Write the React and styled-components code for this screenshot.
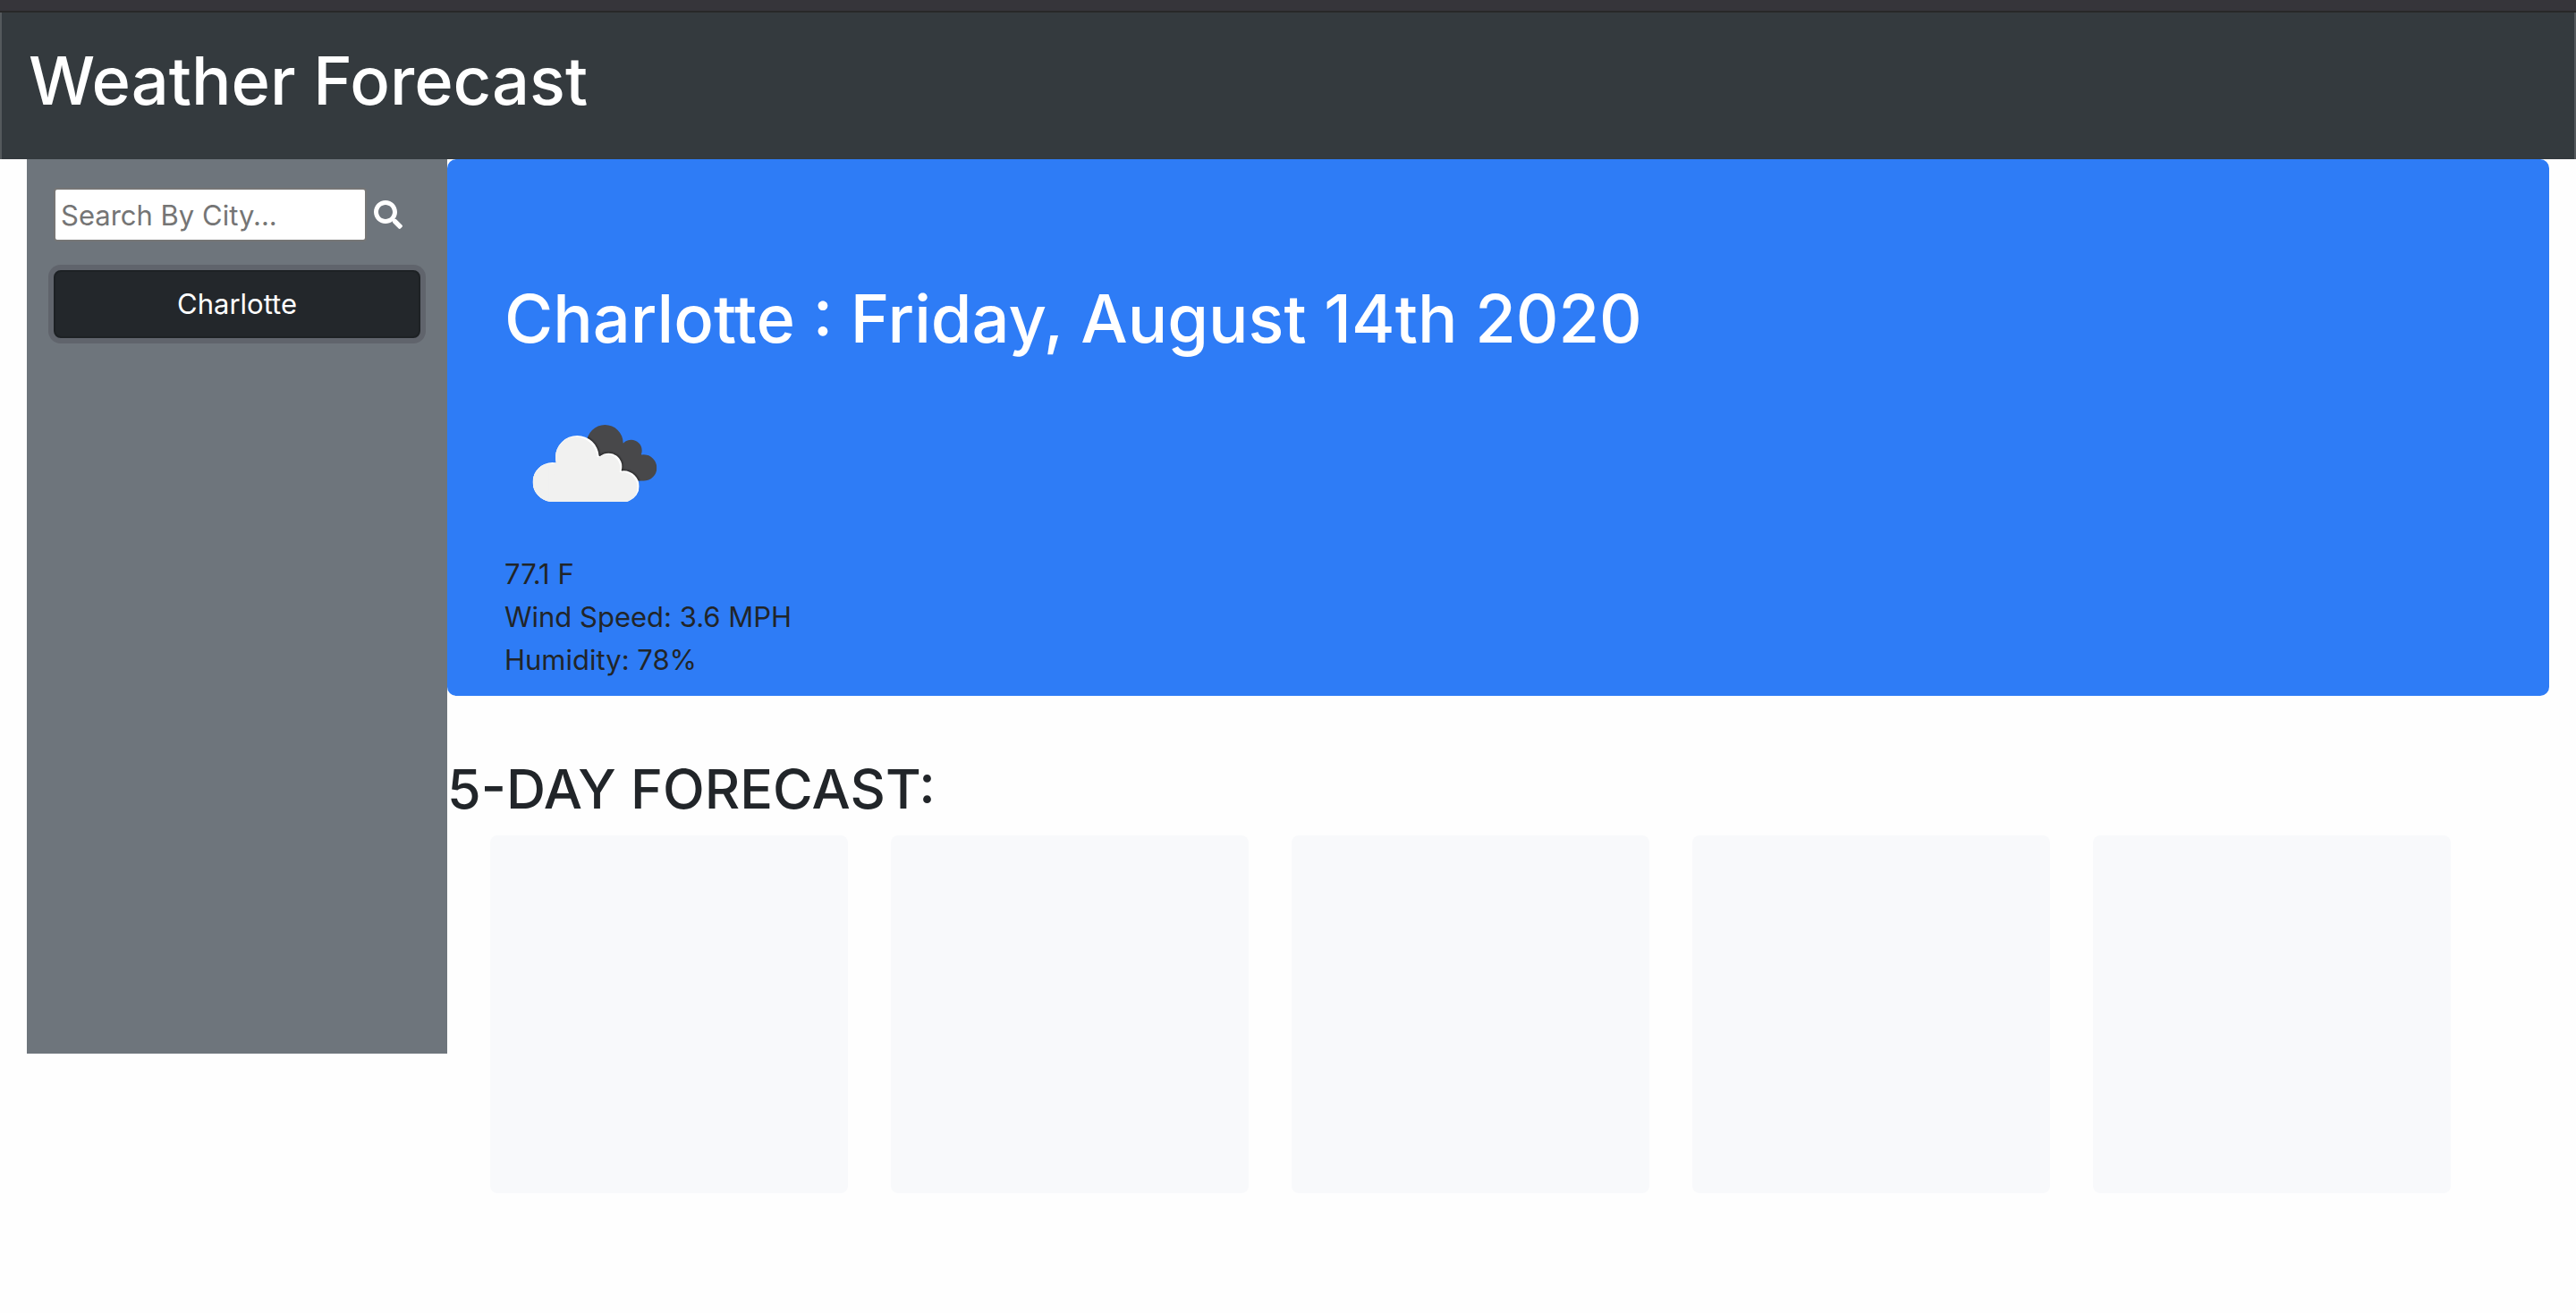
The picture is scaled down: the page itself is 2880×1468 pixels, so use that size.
import React, { useState } from "react";
import styled, { createGlobalStyle } from "styled-components";
import { FaSearch } from "react-icons/fa";

const GlobalStyle = createGlobalStyle`
  *, *::before, *::after {
    box-sizing: border-box;
  }

  body {
    margin: 0;
    background: #fefefe;
    color: #212529;
    font-family: Inter, Roboto, "Liberation Sans", sans-serif;
    font-size: 31px;
    line-height: 48px;
  }
`;

const TopStrip = styled.div`
  height: 14px;
  background: #36353a;
  border-bottom: 2px solid #282828;
`;

const Header = styled.header`
  padding: 28px 30px 40px;
  background: #343a3e;
  border: solid #54595c;
  border-width: 0 2px;
`;

const Title = styled.h1`
  margin: 0;
  color: #fff;
  font-size: 74px;
  font-weight: 500;
  line-height: 96px;
`;

const Layout = styled.div`
  display: grid;
  grid-template-columns: minmax(0, 1fr) minmax(0, 5fr);
  align-items: start;
  padding: 0 30px;
`;

const Sidebar = styled.aside`
  display: flex;
  flex-direction: column;
  gap: 32px;
  min-height: 1000px;
  padding: 32px 30px;
  background: #6e757c;
`;

const SearchForm = styled.form`
  display: flex;
  align-items: center;
  gap: 8px;
`;

const SearchInput = styled.input`
  width: 350px;
  min-width: 0;
  height: 60px;
  padding: 2px 6px;
  border: 2px solid #767676;
  border-radius: 4px;
  background: #fff;
  color: #212529;
  font: inherit;

  &::placeholder {
    color: #757575;
    opacity: 1;
  }
`;

const SearchButton = styled.button`
  display: flex;
  padding: 0;
  border: 0;
  background: none;
  color: #fff;
  font-size: 32px;
  cursor: pointer;
`;

const CityButton = styled.button`
  height: 76px;
  border: 2px solid #1d2124;
  border-radius: 8px;
  background: #23272b;
  box-shadow: 0 0 0 6px #60646c;
  color: #fff;
  font: inherit;
  cursor: pointer;
`;

const CurrentWeather = styled.section`
  padding: 130px 64px 16px;
  border-radius: 10px;
  background: #2e7cf6;
`;

const WeatherIcon = styled.svg`
  display: block;
  width: 200px;
  height: 200px;
  margin-top: 14px;
`;

const Reading = styled.p`
  margin: 0;
`;

const ForecastTitle = styled.h2`
  margin: 66px 0 14px;
  font-size: 61px;
  font-weight: 500;
  line-height: 76px;
`;

const ForecastList = styled.ul`
  display: flex;
  flex-wrap: wrap;
  gap: 48px;
  margin: 0;
  padding: 0 48px;
  list-style: none;
`;

const ForecastCard = styled.li`
  width: 400px;
  height: 400px;
  border-radius: 8px;
  background: #f8f9fb;
`;

const days = ["saturday", "sunday", "monday", "tuesday", "wednesday"];

function FrontCloud(props) {
  return (
    <g {...props}>
      <circle cx="173" cy="300" r="66" />
      <circle cx="256" cy="217" r="73" />
      <circle cx="361" cy="248" r="45" />
      <circle cx="412" cy="314" r="52" />
      <path d="M160 300L210 240L330 212L405 262L430 363L422 366H165Z" />
    </g>
  );
}

function BrokenClouds() {
  return (
    <WeatherIcon viewBox="0 0 600 600" role="img" aria-label="Broken clouds">
      <defs>
        <clipPath id="backCloud">
          <circle cx="349" cy="169" r="61" />
          <circle cx="437" cy="194" r="36" />
          <circle cx="479" cy="252" r="44" />
          <path d="M310 180L409 168L472 208L479 296L330 296Z" />
        </clipPath>
        <clipPath id="frontCloud">
          <circle cx="173" cy="300" r="66" />
          <circle cx="256" cy="217" r="73" />
          <circle cx="361" cy="248" r="45" />
          <circle cx="412" cy="314" r="52" />
          <path d="M160 300L210 240L330 212L405 262L430 363L422 366H165Z" />
        </clipPath>
        <filter id="soften">
          <feGaussianBlur stdDeviation="3" />
        </filter>
      </defs>
      <g transform="translate(-12 63)">
        <g clipPath="url(#backCloud)">
          <rect x="280" y="100" width="250" height="200" fill="#48484a" />
          <FrontCloud fill="#1c1c1e" stroke="#1c1c1e" strokeWidth="4" filter="url(#soften)" />
        </g>
        <g clipPath="url(#frontCloud)">
          <rect x="100" y="135" width="370" height="231" fill="#fff" />
          <FrontCloud fill="#f1f1f0" transform="translate(-6 4)" />
          <rect x="100" y="240" width="60" height="126" fill="#f1f1f0" />
        </g>
      </g>
    </WeatherIcon>
  );
}

export default function App() {
  const [query, setQuery] = useState("");

  return (
    <>
      <GlobalStyle />
      <TopStrip />
      <Header>
        <Title>Weather Forecast</Title>
      </Header>
      <Layout>
        <Sidebar>
          <SearchForm onSubmit={(event) => event.preventDefault()}>
            <SearchInput
              type="text"
              aria-label="Search by city"
              placeholder="Search By City..."
              value={query}
              onChange={(event) => setQuery(event.target.value)}
            />
            <SearchButton type="submit" aria-label="Search">
              <FaSearch />
            </SearchButton>
          </SearchForm>
          <CityButton type="button">Charlotte</CityButton>
        </Sidebar>
        <main>
          <CurrentWeather>
            <Title>Charlotte : Friday, August 14th 2020</Title>
            <BrokenClouds />
            <Reading>77.1 F</Reading>
            <Reading>Wind Speed: 3.6 MPH</Reading>
            <Reading>Humidity: 78%</Reading>
          </CurrentWeather>
          <ForecastTitle>5-DAY FORECAST:</ForecastTitle>
          <ForecastList>
            {days.map((day) => (
              <ForecastCard key={day} />
            ))}
          </ForecastList>
        </main>
      </Layout>
    </>
  );
}
